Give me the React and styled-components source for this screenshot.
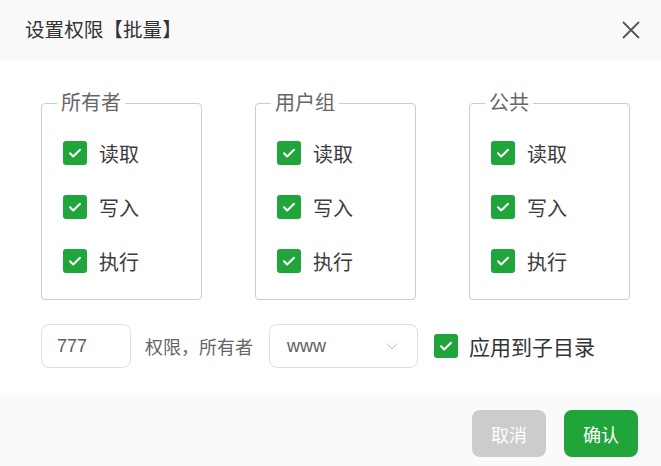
import React from "react";
import styled, { createGlobalStyle } from "styled-components";

const Global = createGlobalStyle`
  html, body { margin: 0; padding: 0; background: #fff; }
  body { font-family: "Liberation Sans", "Noto Sans CJK SC", sans-serif; }
  * { box-sizing: border-box; }
`;

const Dialog = styled.div`
  width: 661px;
  height: 466px;
  display: flex;
  flex-direction: column;
  background: #fff;
`;

const Header = styled.div`
  height: 60px;
  flex: none;
  background: #f9f9f9;
  display: flex;
  align-items: center;
  justify-content: space-between;
  padding: 0 21px 0 25px;
`;

const Title = styled.div`
  font-size: 19.6px;
  color: #333;
  line-height: 24px;
`;

const CloseBtn = styled.button`
  border: none;
  background: none;
  padding: 0;
  width: 18px;
  height: 18px;
  display: flex;
  cursor: pointer;
`;

const Body = styled.div`
  flex: 1;
  padding: 31px 32px 27px 41px;
  display: flex;
  flex-direction: column;
  gap: 24px;
`;

const Groups = styled.div`
  display: grid;
  grid-template-columns: repeat(3, 161px);
  column-gap: 53px;
`;

const Group = styled.fieldset`
  margin: 0;
  border: 1px solid #cccccc;
  border-radius: 4px;
  padding: 11px 0 11px 0;
  min-width: 0;
`;

const Legend = styled.legend`
  margin-left: 15px;
  padding: 0 4px;
  font-size: 20px;
  line-height: 24px;
  color: #666;
`;

const Rows = styled.div`
  padding-left: 21px;
  display: flex;
  flex-direction: column;
`;

const Row = styled.label`
  height: 54px;
  display: flex;
  align-items: center;
  gap: 12px;
  font-size: 20px;
  color: #3c3c3c;
  cursor: pointer;
`;

const Box = styled.span`
  width: 24px;
  height: 24px;
  flex: none;
  border-radius: 3px;
  background: #20a53a;
  display: flex;
  align-items: center;
  justify-content: center;
`;

const Controls = styled.div`
  display: flex;
  align-items: center;
  height: 44px;
`;

const NumInput = styled.input`
  width: 90px;
  height: 44px;
  border: 1px solid #dcdfe6;
  border-radius: 8px;
  padding: 0 15px;
  font-family: "Liberation Sans", "Noto Sans CJK SC", sans-serif;
  font-size: 18px;
  color: #5a5e66;
  outline: none;
`;

const Label = styled.span`
  font-size: 18px;
  color: #666;
  margin: 0 16px 0 14px;
`;

const Select = styled.div`
  width: 149px;
  height: 44px;
  border: 1px solid #dcdfe6;
  border-radius: 8px;
  display: flex;
  align-items: center;
  justify-content: space-between;
  padding: 0 19px 0 17px;
  font-size: 18px;
  color: #5a5e66;
`;

const ApplyRow = styled.label`
  display: flex;
  align-items: center;
  gap: 11px;
  margin-left: 16px;
  font-size: 21px;
  color: #333;
`;

const Footer = styled.div`
  height: 71px;
  flex: none;
  background: #fafafa;
  display: flex;
  justify-content: flex-end;
  align-items: flex-start;
  padding: 15px 23px 0 0;
  gap: 18px;
`;

const Button = styled.button`
  width: 74px;
  height: 47px;
  border: none;
  border-radius: 8px;
  background: ${(p) => (p.$primary ? "#20a53a" : "#cccccc")};
  color: #fff;
  font-family: "Liberation Sans", "Noto Sans CJK SC", sans-serif;
  font-size: 18px;
  cursor: pointer;
`;

const Check = () => (
  <Box>
    <svg width="16" height="16" viewBox="0 0 16 16">
      <path d="M3 8.3l3.2 3.2L13 4.8" fill="none" stroke="#fff" strokeWidth="2" strokeLinecap="round" strokeLinejoin="round" />
    </svg>
  </Box>
);

const groups = ["所有者", "用户组", "公共"];
const perms = ["读取", "写入", "执行"];

export default function App() {
  return (
    <>
      <Global />
      <Dialog>
        <Header>
          <Title>设置权限【批量】</Title>
          <CloseBtn aria-label="close">
            <svg width="18" height="18" viewBox="0 0 18 18">
              <path d="M1 1L17 17M17 1L1 17" stroke="#555" strokeWidth="1.8" fill="none" />
            </svg>
          </CloseBtn>
        </Header>
        <Body>
          <Groups>
            {groups.map((g) => (
              <Group key={g}>
                <Legend>{g}</Legend>
                <Rows>
                  {perms.map((p) => (
                    <Row key={p}>
                      <Check />
                      {p}
                    </Row>
                  ))}
                </Rows>
              </Group>
            ))}
          </Groups>
          <Controls>
            <NumInput defaultValue="777" />
            <Label>权限，所有者</Label>
            <Select>
              <span>www</span>
              <svg width="12" height="7" viewBox="0 0 12 7">
                <path d="M0.5 0.5L6 6L11.5 0.5" fill="none" stroke="#b8bcc4" strokeWidth="1" />
              </svg>
            </Select>
            <ApplyRow>
              <Check />
              应用到子目录
            </ApplyRow>
          </Controls>
        </Body>
        <Footer>
          <Button>取消</Button>
          <Button $primary>确认</Button>
        </Footer>
      </Dialog>
    </>
  );
}
